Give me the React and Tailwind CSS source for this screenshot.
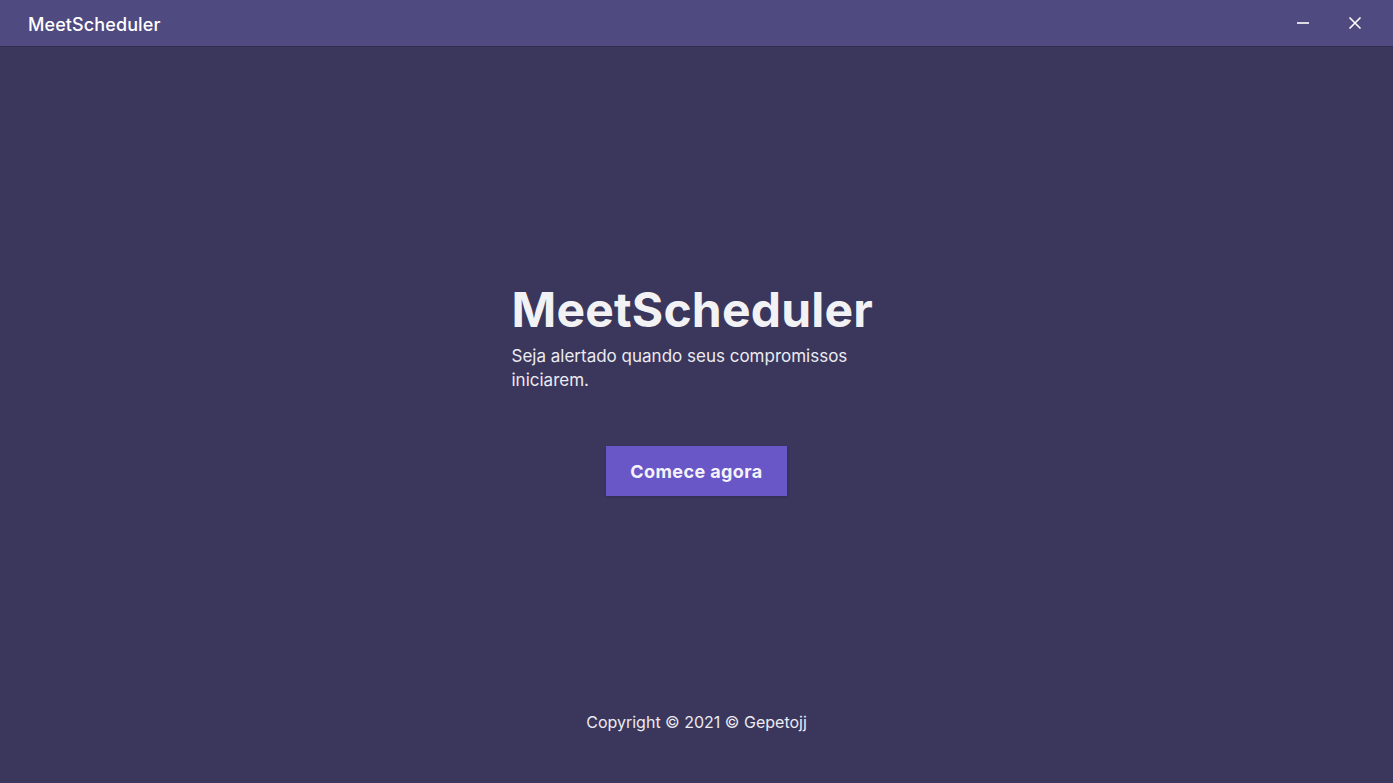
import React from 'react';

const font = { fontFamily: 'Inter, "Noto Sans", sans-serif' };

const TitleBar = () => (
    <div className="flex h-[46px] items-center justify-between bg-[#4f4a7f] pl-7 pr-[30px] shadow-[0_1px_0_rgba(0,0,0,0.15)]">
        <span className="mt-[3px] text-[18px] font-medium text-white tracking-[0.1px]">MeetScheduler</span>
        <div className="flex items-center gap-[36px]">
            <button className="flex h-4 w-4 items-center justify-center" aria-label="minimizar">
                <svg width="14" height="14" viewBox="0 0 14 14"><path d="M1 7h12" stroke="#fff" strokeWidth="1.6" /></svg>
            </button>
            <button className="flex h-4 w-4 items-center justify-center" aria-label="fechar">
                <svg width="14" height="14" viewBox="0 0 14 14"><path d="M1.5 1.5l11 11M12.5 1.5l-11 11" stroke="#fff" strokeWidth="1.6" /></svg>
            </button>
        </div>
    </div>
);

export default function App() {
    return (
        <div className="flex h-[783px] w-full flex-col bg-[#3a365c] text-[#f2f2f4]" style={font}>
            <TitleBar />
            <main className="flex flex-1 flex-col items-center pt-[238px]">
                <div className="w-[370px]">
                    <h1 className="text-[48px] font-bold leading-[52px] tracking-[0.2px]">MeetScheduler</h1>
                    <p className="mt-[8px] w-[360px] text-[17px] leading-[24px] text-[#ecebf2]">
                        Seja alertado quando seus compromissos iniciarem.
                    </p>
                </div>
                <button className="mt-[54px] h-[50px] w-[181px] bg-[#6a57c7] text-[18px] font-bold tracking-[0.4px] text-[#f4f3fa] shadow-sm">
                    Comece agora
                </button>
            </main>
            <footer className="pb-[49px] text-center text-[16px] leading-[24px] text-[#ecebf2]">
                Copyright © 2021 © Gepetojj
            </footer>
        </div>
    );
}
